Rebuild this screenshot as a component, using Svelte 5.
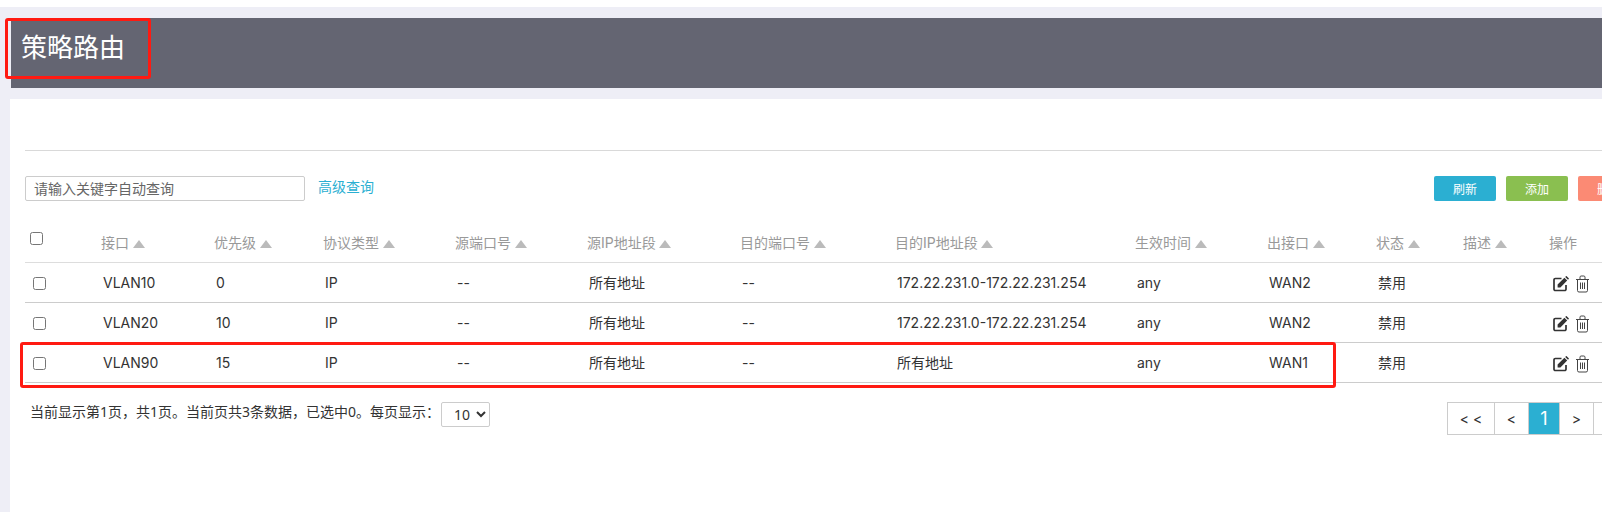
<script lang="ts">
  interface Rule {
    iface: string;
    prio: string;
    dst: string;
    out: string;
  }

  const head = [
    ["接口", true],
    ["优先级", true],
    ["协议类型", true],
    ["源端口号", true],
    ["源IP地址段", true],
    ["目的端口号", true],
    ["目的IP地址段", true],
    ["生效时间", true],
    ["出接口", true],
    ["状态", true],
    ["描述", true],
    ["操作", false],
  ] as const;

  // column widths, first one holds the checkbox
  const cols = [68, 113, 109, 132, 132, 153, 155, 240, 132, 109, 87, 86, 99];

  const rules: Rule[] = [
    { iface: "VLAN10", prio: "0", dst: "172.22.231.0-172.22.231.254", out: "WAN2" },
    { iface: "VLAN20", prio: "10", dst: "172.22.231.0-172.22.231.254", out: "WAN2" },
    { iface: "VLAN90", prio: "15", dst: "所有地址", out: "WAN1" },
  ];
</script>

<div class="page">
  <header class="banner"><h1>策略路由</h1></header>

  <main class="panel">
    <hr />

    <div class="toolbar">
      <input class="search" type="text" placeholder="请输入关键字自动查询" />
      <a class="adv" href="#adv">高级查询</a>
      <div class="actions">
        <button class="btn blue">刷新</button>
        <button class="btn green">添加</button>
        <button class="btn red">删除</button>
      </div>
    </div>

    <table>
      <colgroup>
        {#each cols as w}
          <col style="width: {w}px" />
        {/each}
      </colgroup>
      <thead>
        <tr>
          <th class="check"><input type="checkbox" /></th>
          {#each head as [name, sortable]}
            <th>
              {name}{#if sortable}<i class="caret"></i>{/if}
            </th>
          {/each}
        </tr>
      </thead>
      <tbody>
        {#each rules as r}
          <tr>
            <td class="check"><input type="checkbox" /></td>
            <td>{r.iface}</td>
            <td>{r.prio}</td>
            <td>IP</td>
            <td>--</td>
            <td>所有地址</td>
            <td>--</td>
            <td>{r.dst}</td>
            <td>any</td>
            <td>{r.out}</td>
            <td>禁用</td>
            <td></td>
            <td class="ops">
              <svg width="16" height="16" viewBox="0 0 16 16" aria-hidden="true">
                <path d="M13 9V13.2a1.3 1.3 0 0 1-1.3 1.3H2.3A1.3 1.3 0 0 1 1 13.2V3.8a1.3 1.3 0 0 1 1.3-1.3H8.5" fill="none" stroke="#333" stroke-width="1.7" />
                <path d="M4.6 11.4V8.6L11.4 1.8l2.8 2.8L7.4 11.4zM12.2 1l.7-.7a.6.6 0 0 1 .8 0l2 2a.6.6 0 0 1 0 .8l-.7.7z" fill="#333" />
              </svg>
              <svg width="15" height="18" viewBox="0 0 15 18" aria-hidden="true">
                <path d="M1 4.5h13M2.5 4.5v11a1.5 1.5 0 0 0 1.5 1.5h7a1.5 1.5 0 0 0 1.5-1.5v-11M5 4.5V2.2a1.2 1.2 0 0 1 1.2-1.2h2.6A1.2 1.2 0 0 1 10 2.2v2.3M5.5 7.5v6.5M7.5 7.5v6.5M9.5 7.5v6.5" fill="none" stroke="#444" stroke-width="1" />
              </svg>
            </td>
          </tr>
        {/each}
      </tbody>
    </table>

    <div class="footer">
      <div class="info">
        当前显示第1页，共1页。当前页共3条数据，已选中0。每页显示：
        <select><option>10</option></select>
      </div>
      <nav class="pager">
        <span class="wide">&lt; &lt;</span>
        <span>&lt;</span>
        <span class="on">1</span>
        <span>&gt;</span>
        <span class="wide">&gt; &gt;</span>
      </nav>
    </div>
  </main>

  <!-- annotations drawn over the screenshot -->
  <div class="mark mark-title"></div>
  <div class="mark mark-row"></div>
</div>

<style>
  :global(body) {
    margin: 0;
    overflow: hidden;
    background: #fff;
  }
  .page {
    position: relative;
    width: 1602px;
    height: 512px;
    overflow: hidden;
    box-sizing: border-box;
    margin: 0;
    padding: 18px 0 0 10px;
    background: linear-gradient(#fff 7px, #eeeef6 7px);
    font-family: Inter, "Noto Sans CJK SC", sans-serif;
    font-size: 14px;
    color: #333;
  }
  .banner {
    width: 1700px;
    height: 70px;
    margin-left: 1px;
    background: #646572;
  }
  h1 {
    margin: 0;
    padding: 12px 0 0 10px;
    font-size: 26px;
    line-height: 36px;
    font-weight: 400;
    color: #fff;
  }
  .panel {
    width: 1630px;
    height: 420px;
    margin-top: 11px;
    padding: 0 0 0 15px;
    background: #fff;
  }
  hr {
    width: 1615px;
    height: 1px;
    margin: 0;
    border: 0;
    position: relative;
    top: 51px;
    background: #d9d9d9;
  }
  .toolbar {
    width: 1615px;
    display: flex;
    align-items: flex-start;
    padding-top: 76px;
  }
  .search {
    box-sizing: border-box;
    width: 280px;
    height: 25px;
    padding: 0 8px;
    border: 1px solid #ccc;
    border-radius: 2px;
    font: inherit;
    outline: none;
  }
  .search::placeholder {
    color: #666;
  }
  .adv {
    margin-left: 13px;
    line-height: 22px;
    color: #2bafd2;
    text-decoration: none;
  }
  .actions {
    margin-left: auto;
    display: flex;
    gap: 10px;
  }
  .btn {
    width: 62px;
    height: 25px;
    padding: 0;
    border: 0;
    border-radius: 2px;
    font-family: inherit;
    font-size: 12px;
    color: #fff;
  }
  .blue {
    background: #2bafd2;
  }
  .green {
    background: #8abf50;
  }
  .red {
    background: #fb8a74;
  }
  table {
    width: 1615px;
    margin-top: 21px;
    border-collapse: collapse;
    table-layout: fixed;
  }
  th {
    height: 40px;
    padding: 0 0 0 8px;
    border-bottom: 1px solid #ddd;
    box-sizing: border-box;
    text-align: left;
    font-weight: 400;
    color: #999;
    white-space: nowrap;
  }
  td {
    height: 40px;
    padding: 0 0 0 10px;
    border-bottom: 1px solid #ccc;
    box-sizing: border-box;
    white-space: nowrap;
  }
  th.check {
    padding: 0 0 6px 5px;
  }
  td.check {
    padding: 3px 0 0 8px;
  }
  input[type="checkbox"] {
    display: block;
    margin: 0;
  }
  .caret {
    display: inline-block;
    margin-left: 3.5px;
    border: 6px solid transparent;
    border-top: 0;
    border-bottom: 8px solid #bbb;
  }
  td.ops {
    padding: 3px 0 0 12px;
  }
  .ops svg {
    vertical-align: middle;
    margin-right: 2px;
  }
  .footer {
    width: 1615px;
    display: flex;
    justify-content: space-between;
    align-items: flex-start;
    margin-top: 19px;
  }
  .info {
    padding-left: 5px;
    display: flex;
    align-items: flex-start;
    gap: 1px;
    line-height: 20px;
    font-family: "Noto Sans", "Noto Sans CJK SC", sans-serif;
  }
  select {
    width: 49px;
    height: 25px;
    border: 1px solid #ccc;
    border-radius: 2px;
    background: #fff;
    font-family: inherit;
    font-size: 14px;
    color: #333;
    padding-left: 8px;
  }
  .pager {
    display: flex;
    height: 33px;
    box-sizing: border-box;
    border: 1px solid #ccc;
  }
  .pager span {
    width: 33px;
    border-right: 1px solid #ccc;
    display: flex;
    align-items: center;
    justify-content: center;
    font-size: 14px;
  }
  .pager span:last-child {
    border-right: 0;
  }
  .pager .wide {
    width: 45px;
  }
  .pager .wide:first-child {
    width: 46px;
  }
  .pager .on {
    width: 30px;
    background: #2bafd2;
    color: #fff;
    font-size: 18px;
  }
  .mark {
    position: absolute;
    box-sizing: border-box;
    border: 3px solid #ff1a12;
    border-radius: 3px;
  }
  .mark-title {
    left: 5px;
    top: 18px;
    width: 146px;
    height: 61px;
  }
  .mark-row {
    left: 20px;
    top: 342px;
    width: 1316px;
    height: 46px;
  }
</style>
